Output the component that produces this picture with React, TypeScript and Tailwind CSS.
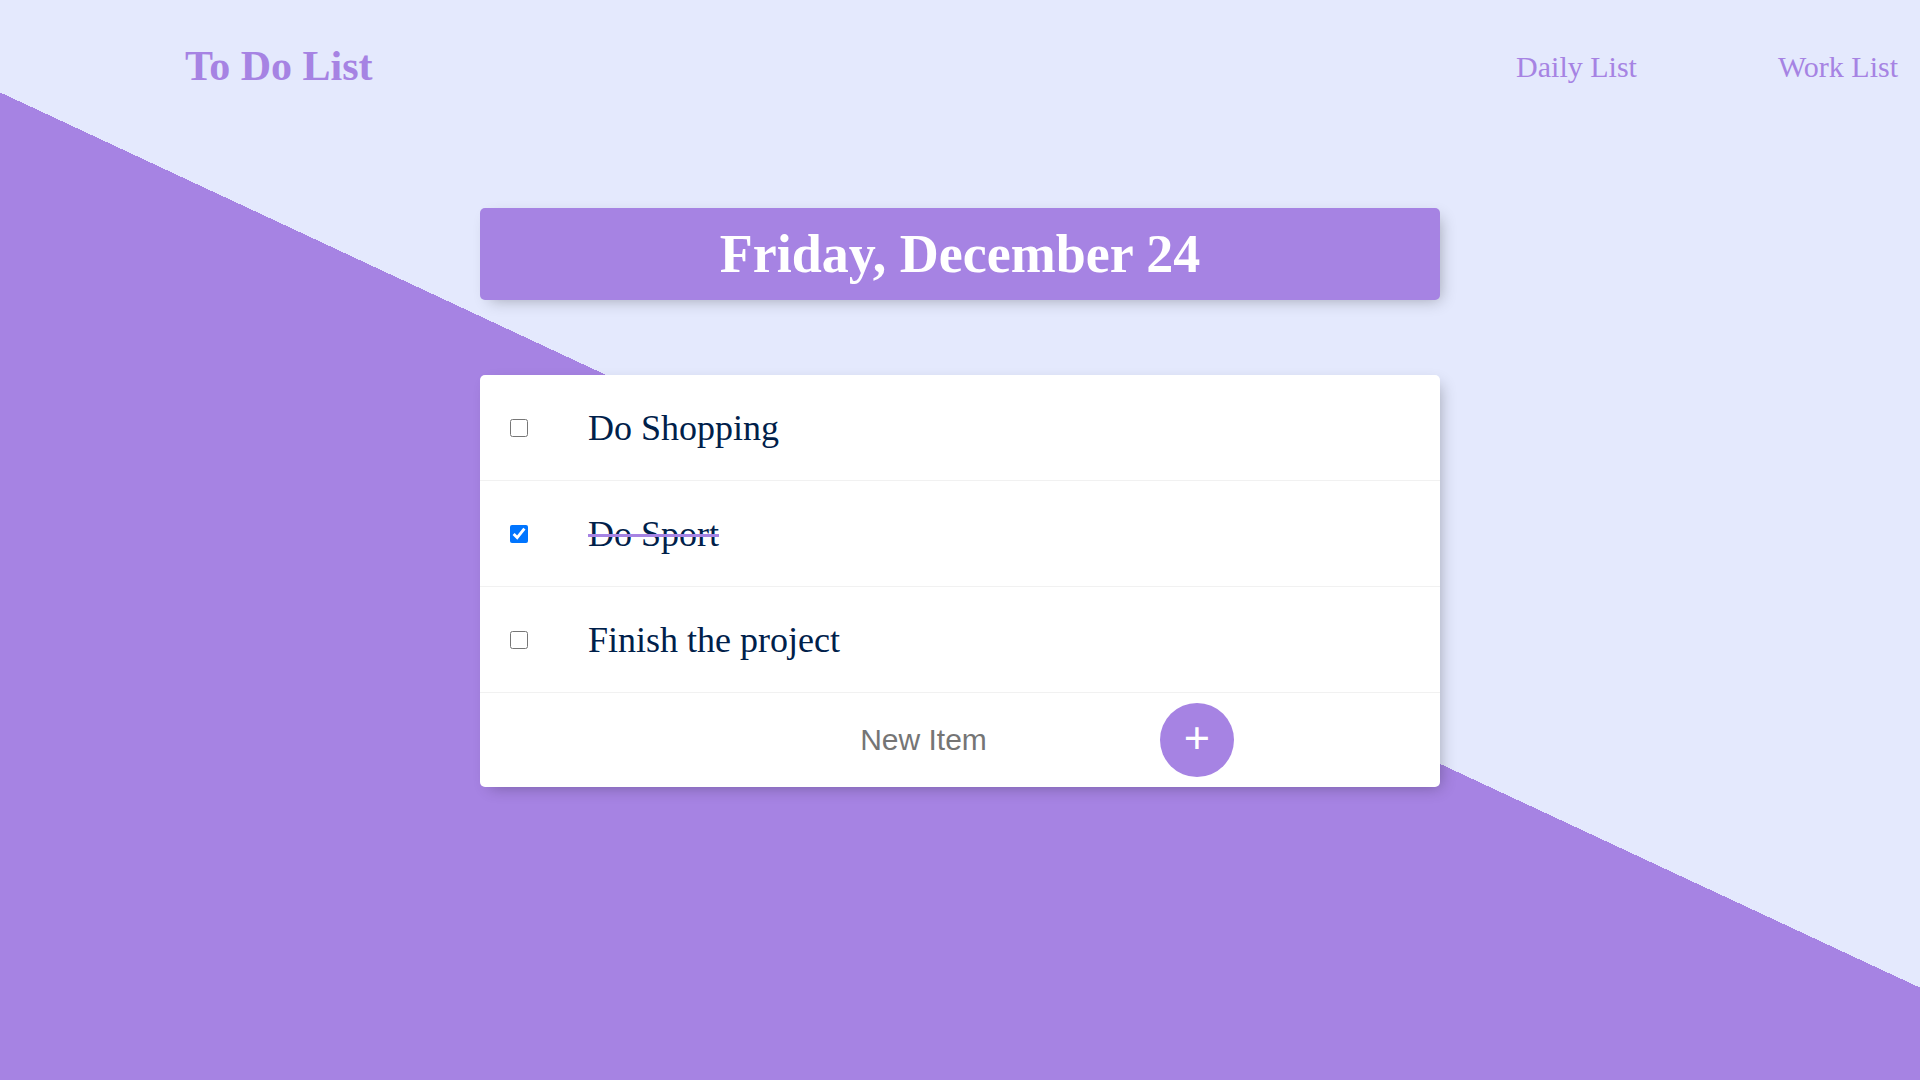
import React from "react";

const items = [
  { text: "Do Shopping", done: false },
  { text: "Do Sport", done: true },
  { text: "Finish the project", done: false },
];

export default function App() {
  return (
    <div className="min-h-screen w-full overflow-hidden bg-[linear-gradient(25deg,#A683E3_50%,#E4E9FD_50%)] font-['Liberation_Serif',serif]">
      <header className="flex h-[133px] items-center justify-between pl-[185px] pr-[22px]">
        <div className="text-[42px] font-bold text-[#A683E3]">To Do List</div>
        <nav className="flex items-center gap-[141px] text-[30px] text-[#A683E3]">
          <span>Daily List</span>
          <span>Work List</span>
        </nav>
      </header>

      <div className="mx-auto mt-[75px] flex h-[92px] w-[960px] items-center justify-center rounded-[5px] bg-[#A683E3] shadow-[5px_5px_15px_-5px_rgba(0,0,0,0.3)]">
        <h1 className="text-[54px] font-bold text-white">Friday, December 24</h1>
      </div>

      <div className="mx-auto mt-[75px] w-[960px] rounded-[5px] bg-white shadow-[5px_5px_15px_-5px_rgba(0,0,0,0.3)]">
        {items.map((it) => (
          <div key={it.text} className="flex h-[106px] items-center border-b border-[#F1F1F1]">
            <input
              type="checkbox"
              defaultChecked={it.done}
              className="m-[30px] h-[18px] w-[18px] shrink-0"
            />
            <p
              className={
                "px-[30px] text-[36px] text-[#00204a] " +
                (it.done ? "line-through decoration-[#A683E3] [text-decoration-thickness:3px]" : "")
              }
            >
              {it.text}
            </p>
          </div>
        ))}
        <div className="flex h-[94px] items-center pl-[228px]">
          <input
            type="text"
            placeholder="New Item"
            className="h-[60px] w-[431px] bg-transparent text-center font-['Liberation_Sans',Arial,sans-serif] text-[30px] text-[#00204a] outline-none placeholder:text-[#757575]"
          />
          <button className="ml-[21px] flex h-[74px] w-[74px] items-center justify-center rounded-full bg-[#A683E3] pb-[5px] font-['Liberation_Sans',Arial,sans-serif] text-[45px] leading-none text-white">
            +
          </button>
        </div>
      </div>
    </div>
  );
}
